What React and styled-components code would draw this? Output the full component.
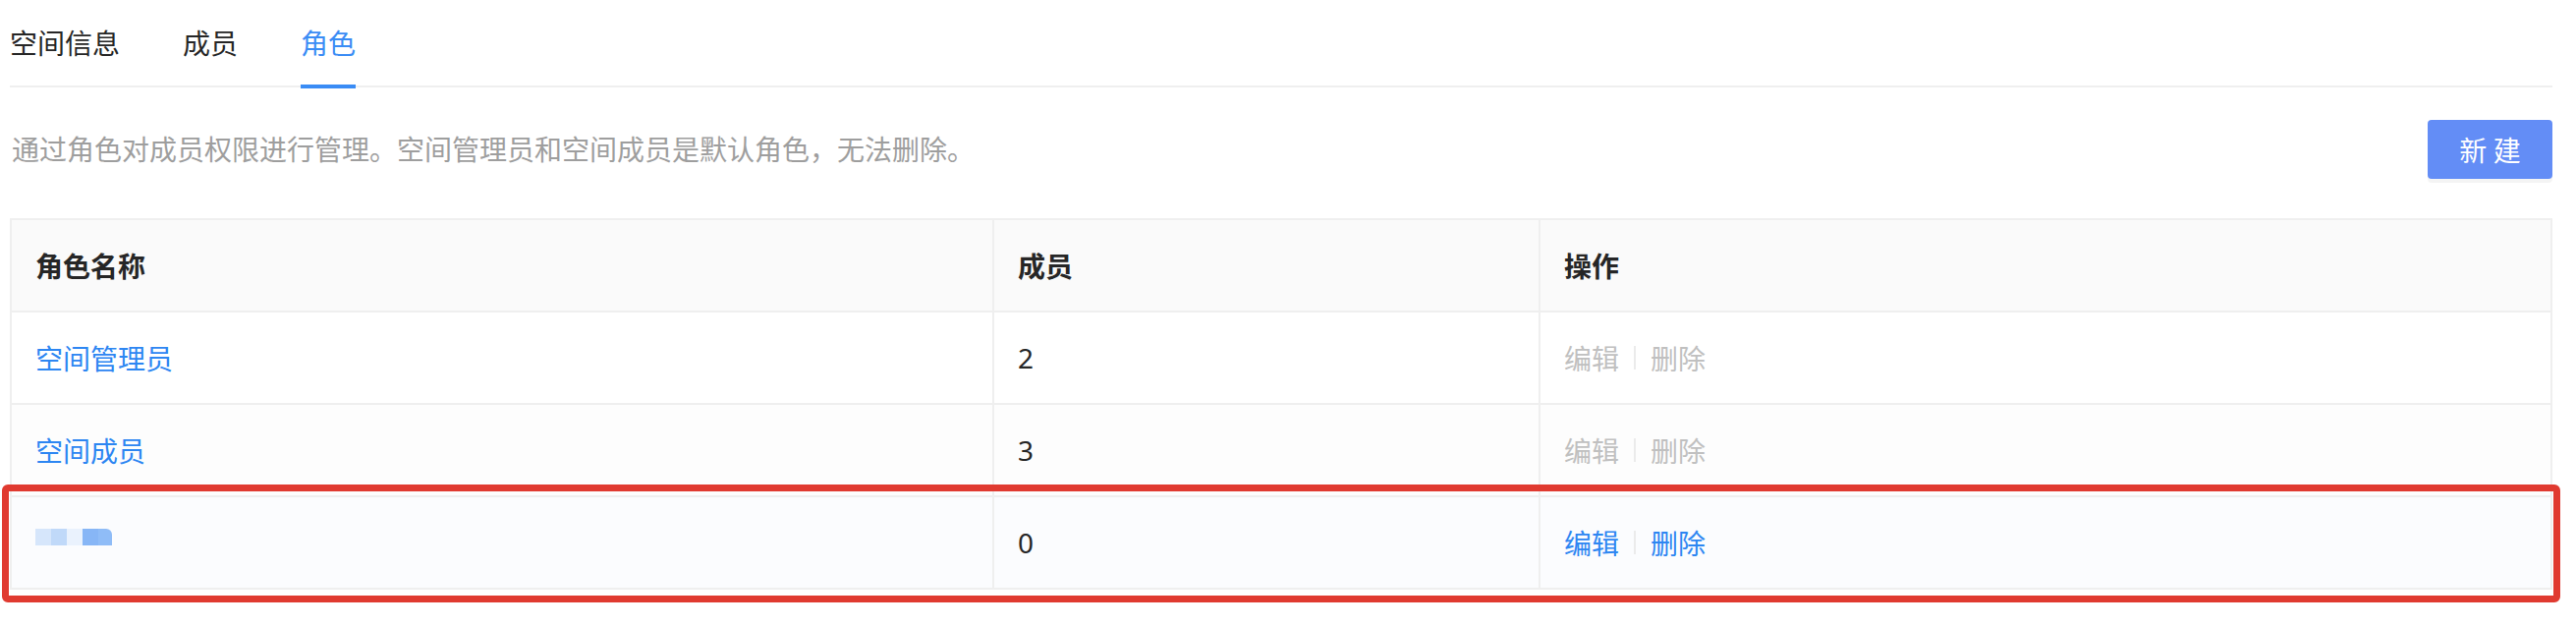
import styled, { createGlobalStyle } from "styled-components";

const GlobalStyle = createGlobalStyle`
  body {
    margin: 0;
    background: #fff;
    font-family: "Noto Sans", "Noto Sans CJK SC", sans-serif;
  }
`;

const Page = styled.div`
  width: 2622px;
  box-sizing: border-box;
  padding: 0 24px 38px 10px;
`;

const TabBar = styled.div`
  display: flex;
  gap: 64px;
  border-bottom: 2px solid #efefef;
`;

const Tab = styled.div`
  position: relative;
  padding: 24px 0 23px;
  font-size: 28px;
  line-height: 40px;
  color: ${(props) => (props.active ? "#3a8cf5" : "#262626")};
`;

const InkBar = styled.span`
  position: absolute;
  left: 0;
  right: 0;
  bottom: -3px;
  height: 4px;
  background: #3a8cf5;
`;

const Toolbar = styled.div`
  display: flex;
  align-items: center;
  justify-content: space-between;
  margin-top: 33px;
`;

const Description = styled.p`
  margin: 0;
  padding-left: 2px;
  font-size: 28px;
  line-height: 40px;
  color: #9e9e9e;
`;

const Button = styled.button`
  width: 127px;
  height: 60px;
  border: none;
  border-radius: 4px;
  background: #638df6;
  color: #fff;
  font-family: "Noto Sans CJK SC", sans-serif;
  font-size: 28px;
  box-shadow: 0 4px 0 rgba(0, 0, 0, 0.045);
  cursor: pointer;
`;

const TableWrap = styled.div`
  position: relative;
  margin-top: 40px;
  border-top: 2px solid #efefef;
  border-left: 2px solid #efefef;
`;

const Row = styled.div`
  display: grid;
  grid-template-columns: 1000px 556px 1fr;
  background: ${(props) => props.bg || "#fff"};
`;

const Cell = styled.div`
  box-sizing: border-box;
  height: 94px;
  display: flex;
  align-items: center;
  padding: 0 24px;
  border-right: 2px solid #efefef;
  border-bottom: 2px solid #efefef;
  font-size: 28px;
  color: #262626;
  font-weight: ${(props) => (props.head ? 600 : 400)};
  background: ${(props) => (props.head ? "#fafafa" : "transparent")};
`;

const Link = styled.span`
  color: #2d86f2;
`;

const Actions = styled.div`
  display: flex;
  align-items: center;
  color: ${(props) => (props.enabled ? "#2d86f2" : "#c0c0c0")};
`;

const Divider = styled.span`
  width: 2px;
  height: 24px;
  margin: 0 15px;
  background: #ebebeb;
`;

const Mosaic = styled.div`
  display: flex;
  height: 17px;
  margin-top: -12px;
`;

const Tile = styled.span`
  width: ${(props) => props.w}px;
  background: ${(props) => props.color};
  border-top-right-radius: ${(props) => (props.last ? "6px" : "0")};
`;

const Highlight = styled.div`
  position: absolute;
  left: -10px;
  top: 269px;
  width: 2604px;
  height: 120px;
  box-sizing: border-box;
  border: 7px solid #e03a30;
  border-radius: 6px;
  pointer-events: none;
`;

const roles = [
  { name: "空间管理员", count: 2, enabled: false, bg: "#fff" },
  { name: "空间成员", count: 3, enabled: false, bg: "#fdfdfd" },
  { name: null, count: 0, enabled: true, bg: "#fbfcfe" },
];

const tiles = [
  { w: 16, color: "#d6e6fb" },
  { w: 16, color: "#c0d9f9" },
  { w: 16, color: "#eaf2fd" },
  { w: 16, color: "#87b6f6" },
  { w: 14, color: "#8fbcf7", last: true },
];

const App = () => {
  return (
    <Page>
      <GlobalStyle />
      <TabBar>
        <Tab>空间信息</Tab>
        <Tab>成员</Tab>
        <Tab active>
          角色
          <InkBar />
        </Tab>
      </TabBar>

      <Toolbar>
        <Description>
          通过角色对成员权限进行管理。空间管理员和空间成员是默认角色，无法删除。
        </Description>
        <Button>新 建</Button>
      </Toolbar>

      <TableWrap>
        <Row>
          <Cell head>角色名称</Cell>
          <Cell head>成员</Cell>
          <Cell head>操作</Cell>
        </Row>
        {roles.map((role, i) => (
          <Row key={i} bg={role.bg}>
            <Cell>
              {role.name ? (
                <Link>{role.name}</Link>
              ) : (
                <Mosaic>
                  {tiles.map((t, j) => (
                    <Tile key={j} w={t.w} color={t.color} last={t.last} />
                  ))}
                </Mosaic>
              )}
            </Cell>
            <Cell>{role.count}</Cell>
            <Cell>
              <Actions enabled={role.enabled}>
                <span>编辑</span>
                <Divider />
                <span>删除</span>
              </Actions>
            </Cell>
          </Row>
        ))}
        <Highlight />
      </TableWrap>
    </Page>
  );
};

export default App;
